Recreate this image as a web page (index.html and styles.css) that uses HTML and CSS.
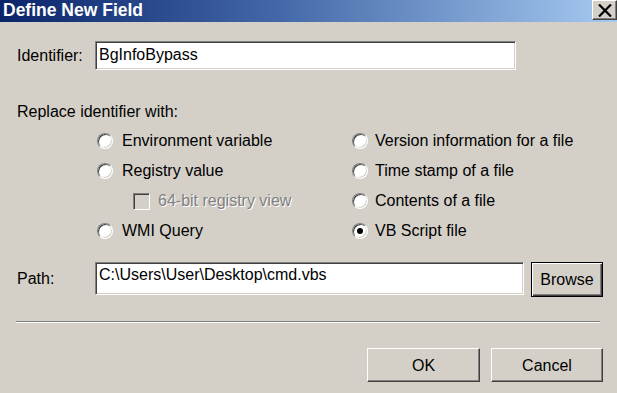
FILE: index.html
```html
<!DOCTYPE html>
<html>
<head>
<meta charset="utf-8">
<title>Define New Field</title>
<link rel="stylesheet" href="styles.css">
</head>
<body>
<div class="dialog">
  <div class="titlebar">
    <span class="title">Define New Field</span>
    <span class="close">
      <svg width="14" height="13" viewBox="0 0 14 13"><path d="M1 0.5 L13 12.5 M13 0.5 L1 12.5" stroke="#000" stroke-width="2.2" fill="none"/></svg>
    </span>
  </div>
  <div class="body">
    <div class="row id-row">
      <span class="label">Identifier:</span>
      <div class="field id-field">BgInfoBypass</div>
    </div>
    <div class="section-label">Replace identifier with:</div>
    <div class="options">
      <div class="opt"><span class="radio"></span><span>Environment variable</span></div>
      <div class="opt"><span class="radio"></span><span>Version information for a file</span></div>
      <div class="opt"><span class="radio"></span><span>Registry value</span></div>
      <div class="opt"><span class="radio"></span><span>Time stamp of a file</span></div>
      <div class="opt sub"><span class="check"></span><span class="disabled">64-bit registry view</span></div>
      <div class="opt"><span class="radio"></span><span>Contents of a file</span></div>
      <div class="opt"><span class="radio"></span><span>WMI Query</span></div>
      <div class="opt"><span class="radio checked"></span><span>VB Script file</span></div>
    </div>
    <div class="row path-row">
      <span class="label">Path:</span>
      <div class="field path-field">C:\Users\User\Desktop\cmd.vbs</div>
      <div class="btn default browse"><span class="btn-inner">Browse</span></div>
    </div>
    <div class="separator"></div>
    <div class="buttons">
      <div class="btn ok"><span class="btn-inner">OK</span></div>
      <div class="btn cancel"><span class="btn-inner">Cancel</span></div>
    </div>
  </div>
</div>
</body>
</html>
```

FILE: styles.css
```css
* { box-sizing: border-box; }
html, body { margin: 0; padding: 0; }
body {
  width: 617px;
  height: 393px;
  overflow: hidden;
  background: #d4d0c8;
  font-family: "Liberation Sans", Arial, sans-serif;
  font-size: 16px;
  color: #000;
}
.dialog { width: 617px; height: 393px; display: flex; flex-direction: column; }

.titlebar {
  height: 22px;
  display: flex;
  justify-content: space-between;
  align-items: flex-start;
  background: linear-gradient(to right, #0a246a 0%, #4368a8 45%, #a6caf0 100%);
}
.title {
  color: #fff;
  font-weight: bold;
  font-size: 17.5px;
  line-height: 20px;
  padding-left: 3px;
}
.close {
  width: 25px;
  height: 20px;
  background: #d4d0c8;
  border: 1px solid;
  border-color: #fff #404040 #404040 #fff;
  box-shadow: inset -1px -1px 0 #808080;
  display: flex;
  align-items: center;
  justify-content: center;
}

.body {
  padding: 19px 14px 0 17px;
  display: flex;
  flex-direction: column;
}
.row { display: flex; align-items: center; }
.label { width: 78px; flex: none; }
.id-row { height: 29px; }
.id-row .label { padding-top: 1px; }

.field {
  background: #fff;
  border: 1px solid;
  border-color: #808080 #fff #fff #808080;
  box-shadow: inset 1px 1px 0 #404040, inset -1px -1px 0 #d4d0c8;
  padding: 0 3px;
  display: flex;
  align-items: flex-start;
  line-height: 18px;
}
.id-field { width: 421px; height: 29px; padding-top: 4px; }

.section-label { margin-top: 33px; line-height: 18px; }

.options {
  margin-top: 5px;
  padding-left: 80px;
  display: grid;
  grid-template-columns: 255px 1fr;
  grid-auto-rows: 30px;
}
.opt { display: flex; align-items: center; gap: 9px; line-height: 18px; }
.opt:nth-child(even) { gap: 7px; }
.opt.sub { padding-left: 36px; gap: 8px; }

.radio {
  width: 16px;
  height: 16px;
  flex: none;
  border-radius: 50%;
  background: #fff;
  border: 1px solid;
  border-color: #808080 #fff #fff #808080;
  box-shadow: inset 1px 1px 0 #404040, inset -1px -1px 0 #d4d0c8;
  display: flex;
  align-items: center;
  justify-content: center;
}
.radio.checked::after {
  content: "";
  width: 6px;
  height: 6px;
  border-radius: 50%;
  background: #000;
}
.check {
  width: 17px;
  height: 17px;
  flex: none;
  background: #d4d0c8;
  border: 1px solid;
  border-color: #808080 #fff #fff #808080;
  box-shadow: inset 1px 1px 0 #404040, inset -1px -1px 0 #d4d0c8;
}
.disabled { color: #808080; text-shadow: 1px 1px 0 #fff; }

.path-row { margin-top: 16px; height: 34px; }
.path-row .label { padding-top: 0; }
.path-field { width: 429px; height: 33px; padding-top: 3px; margin-right: 7px; align-self: flex-start; }

.btn {
  height: 34px;
  background: #d4d0c8;
  border: 1px solid;
  border-color: #fff #404040 #404040 #fff;
  box-shadow: inset -1px -1px 0 #808080;
  display: flex;
  align-items: center;
  justify-content: center;
}
.btn-inner { line-height: 18px; padding-top: 1px; }
.btn.default {
  border: 1px solid #000;
  box-shadow: inset 1px 1px 0 #fff, inset -1px -1px 0 #404040, inset -2px -2px 0 #808080;
}
.browse { width: 72px; height: 35px; }

.separator {
  margin-top: 25px;
  margin-left: -1px;
  width: 584px;
  height: 2px;
  border-top: 1px solid #808080;
  border-bottom: 1px solid #fff;
}
.buttons {
  margin-top: 25px;
  display: flex;
  justify-content: flex-end;
  gap: 11px;
}
.ok { width: 113px; }
.cancel { width: 112px; }
```
